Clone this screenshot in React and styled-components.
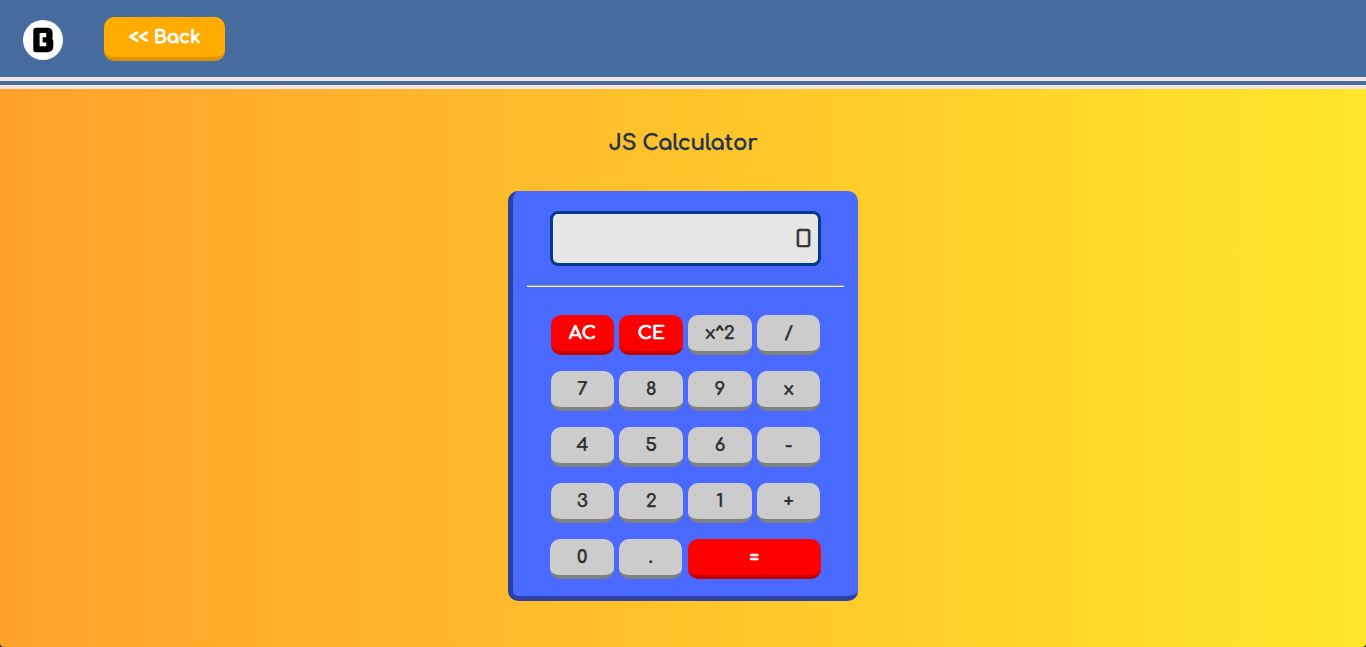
import React from "react";
import styled, { createGlobalStyle } from "styled-components";

const GlobalStyle = createGlobalStyle`
  * { box-sizing: border-box; }
  html { background: #111; }
  body { margin: 0; background: #111; font-family: Comfortaa, Quicksand, Lato, sans-serif; }
  button { font-family: inherit; }
`;

const Page = styled.div`
  height: 647px;
  overflow: hidden;
  display: flex;
  flex-direction: column;
  border-radius: 0 0 4px 4px;
  background: linear-gradient(to right, #ffa12b, #ffe62a);
`;

const Header = styled.header`
  height: 89px;
  flex: none;
  display: flex;
  align-items: flex-start;
  gap: 41px;
  padding: 17px 23px 0;
  background: #466b9f;
  border-bottom: 12px double #f3e3e1;
`;

const Logo = styled.svg`
  width: 40px;
  height: 40px;
  margin-top: 3px;
`;

const BackButton = styled.button`
  width: 121px;
  height: 44px;
  padding: 0;
  border: 0;
  border-bottom: 4px solid #db9300;
  border-radius: 10px;
  background: #ffab00;
  color: #fff;
  font-size: 18.3px;
  font-weight: 700;
  letter-spacing: -0.1px;
  -webkit-text-stroke: 0.75px currentColor;
`;

const Main = styled.main`
  flex: 1;
  display: flex;
  flex-direction: column;
  align-items: center;
`;

const Title = styled.h1`
  margin: 40px 0 34px;
  height: 28px;
  line-height: 28px;
  font-size: 21.4px;
  font-weight: 700;
  letter-spacing: -0.2px;
  color: #20344e;
  -webkit-text-stroke: 0.35px currentColor;
`;

const Calculator = styled.section`
  width: 350px;
  height: 410px;
  padding: 20px 14px 0;
  border-left: 5px solid #2d41a1;
  border-bottom: 5px solid #2d41a1;
  border-radius: 10px;
  background: #4a69ff;
`;

const Display = styled.div`
  width: 271px;
  height: 55px;
  margin-left: 23px;
  padding-right: 6px;
  border: 3px solid #003c8a;
  border-radius: 8px;
  background: #e6e6e6;
  display: flex;
  justify-content: flex-end;
  align-items: center;
  color: #333;
  font: 400 26px/1 Electrolize, "Share Tech", "Liberation Sans", sans-serif;
  -webkit-text-stroke: 0.6px currentColor;
`;

const Digits = styled.span`
  transform: scaleX(0.86);
  transform-origin: right center;
`;

const Divider = styled.hr`
  width: 317px;
  height: 2px;
  margin: 19px 0 28px;
  border: 0;
  border-top: 1px solid #9a9a9a;
  border-bottom: 1px solid #eee;
`;

const Keypad = styled.div`
  display: flex;
  flex-direction: column;
  gap: 16px;
  margin-left: 23.6px;
`;

const KeyRow = styled.div`
  display: flex;
  gap: 5.25px;
  margin-left: ${({ $last }) => ($last ? "-0.4px" : "0")};
`;

const Key = styled.button`
  width: ${({ $wide }) => ($wide ? "133px" : "63.5px")};
  height: 40px;
  padding: 0;
  border: 0;
  border-bottom: 4px solid ${({ $red }) => ($red ? "#c40000" : "#808080")};
  border-radius: 10px;
  background: ${({ $red }) => ($red ? "#ff0000" : "#cccccc")};
  color: ${({ $red }) => ($red ? "#fff" : "#2e2e2e")};
  font-size: 18.8px;
  line-height: 24px;
  font-weight: 700;
  letter-spacing: -0.2px;
  -webkit-text-stroke: ${({ $red }) => ($red ? "0.6px" : "0.25px")} currentColor;
`;

const rows = [
  ["AC", "CE", "x^2", "/"],
  ["7", "8", "9", "x"],
  ["4", "5", "6", "-"],
  ["3", "2", "1", "+"],
  ["0", ".", "="],
];
const redKeys = ["AC", "CE", "="];

export default function App() {
  return (
    <>
      <GlobalStyle />
      <Page>
        <Header>
          <Logo viewBox="0 0 40 40" aria-label="B">
            <circle cx="20" cy="20" r="20" fill="#fff" />
            <path
              fill="#000"
              d="M13 7.8H24Q29.6 7.8 29.6 13V17L29.2 18.6L30.3 20.8V26Q30.3 32.2 24 32.2H13Q10.3 32.2 10.3 29.7V10.3Q10.3 7.8 13 7.8Z"
            />
            <path fill="#fff" d="M16.6 13H23.2V17.3H19.6V22.4H23.2V26.3H16.6Z" />
          </Logo>
          <BackButton>&lt;&lt; Back</BackButton>
        </Header>
        <Main>
          <Title>JS Calculator</Title>
          <Calculator>
            <Display><Digits>0</Digits></Display>
            <Divider />
            <Keypad>
              {rows.map((row, i) => (
                <KeyRow key={i} $last={i === rows.length - 1}>
                  {row.map((label) => (
                    <Key key={label} $red={redKeys.includes(label)} $wide={label === "="}>
                      {label}
                    </Key>
                  ))}
                </KeyRow>
              ))}
            </Keypad>
          </Calculator>
        </Main>
      </Page>
    </>
  );
}
